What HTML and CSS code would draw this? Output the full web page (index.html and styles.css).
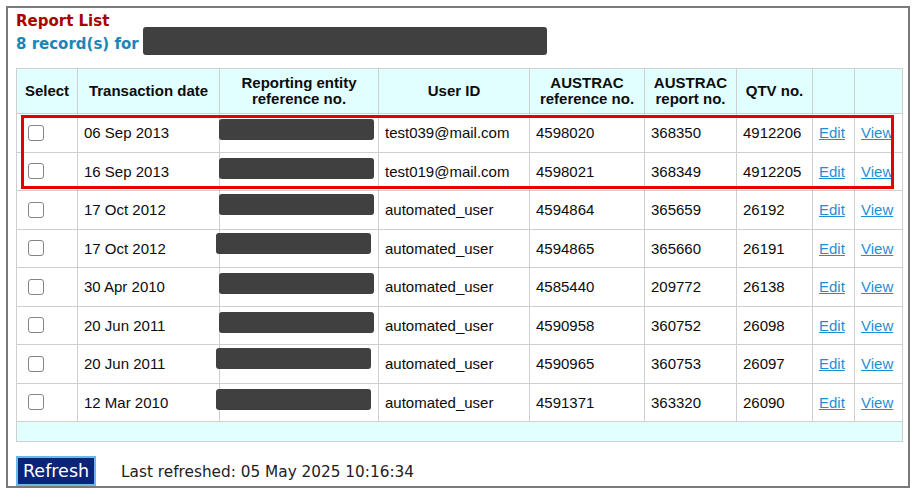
FILE: index.html
```html
<!DOCTYPE html>
<html lang="en">
<head>
  <meta charset="UTF-8">
  <title>Report List</title>
  <link rel="stylesheet" href="styles.css">
</head>
<body>
  <div class="frame">
    <h1 class="title">Report List</h1>
    <div class="records">
      <span class="records-text">8 record(s) for</span>
      <span class="redact redact-name"></span>
    </div>

    <div class="table-wrap">
      <table class="reports">
        <colgroup>
          <col class="c-select">
          <col class="c-date">
          <col class="c-ref">
          <col class="c-user">
          <col class="c-aref">
          <col class="c-arep">
          <col class="c-qtv">
          <col class="c-edit">
          <col class="c-view">
        </colgroup>
        <thead>
          <tr>
            <th>Select</th>
            <th>Transaction date</th>
            <th>Reporting entity<br>reference no.</th>
            <th>User ID</th>
            <th>AUSTRAC<br>reference no.</th>
            <th>AUSTRAC<br>report no.</th>
            <th>QTV no.</th>
            <th></th>
            <th></th>
          </tr>
        </thead>
        <tbody>
          <tr>
            <td class="sel"><span class="check"></span></td>
            <td>06 Sep 2013</td>
            <td class="ref"><span class="redact"></span></td>
            <td>test039@mail.com</td>
            <td>4598020</td>
            <td>368350</td>
            <td>4912206</td>
            <td><a href="#">Edit</a></td>
            <td><a href="#">View</a></td>
          </tr>
          <tr>
            <td class="sel"><span class="check"></span></td>
            <td>16 Sep 2013</td>
            <td class="ref"><span class="redact"></span></td>
            <td>test019@mail.com</td>
            <td>4598021</td>
            <td>368349</td>
            <td>4912205</td>
            <td><a href="#">Edit</a></td>
            <td><a href="#">View</a></td>
          </tr>
          <tr>
            <td class="sel"><span class="check"></span></td>
            <td>17 Oct 2012</td>
            <td class="ref"><span class="redact up"></span></td>
            <td>automated_user</td>
            <td>4594864</td>
            <td>365659</td>
            <td>26192</td>
            <td><a href="#">Edit</a></td>
            <td><a href="#">View</a></td>
          </tr>
          <tr>
            <td class="sel"><span class="check"></span></td>
            <td>17 Oct 2012</td>
            <td class="ref"><span class="redact up left"></span></td>
            <td>automated_user</td>
            <td>4594865</td>
            <td>365660</td>
            <td>26191</td>
            <td><a href="#">Edit</a></td>
            <td><a href="#">View</a></td>
          </tr>
          <tr>
            <td class="sel"><span class="check"></span></td>
            <td>30 Apr 2010</td>
            <td class="ref"><span class="redact"></span></td>
            <td>automated_user</td>
            <td>4585440</td>
            <td>209772</td>
            <td>26138</td>
            <td><a href="#">Edit</a></td>
            <td><a href="#">View</a></td>
          </tr>
          <tr>
            <td class="sel"><span class="check"></span></td>
            <td>20 Jun 2011</td>
            <td class="ref"><span class="redact"></span></td>
            <td>automated_user</td>
            <td>4590958</td>
            <td>360752</td>
            <td>26098</td>
            <td><a href="#">Edit</a></td>
            <td><a href="#">View</a></td>
          </tr>
          <tr>
            <td class="sel"><span class="check"></span></td>
            <td>20 Jun 2011</td>
            <td class="ref"><span class="redact up left"></span></td>
            <td>automated_user</td>
            <td>4590965</td>
            <td>360753</td>
            <td>26097</td>
            <td><a href="#">Edit</a></td>
            <td><a href="#">View</a></td>
          </tr>
          <tr>
            <td class="sel"><span class="check"></span></td>
            <td>12 Mar 2010</td>
            <td class="ref"><span class="redact left"></span></td>
            <td>automated_user</td>
            <td>4591371</td>
            <td>363320</td>
            <td>26090</td>
            <td><a href="#">Edit</a></td>
            <td><a href="#">View</a></td>
          </tr>
        </tbody>
        <tfoot>
          <tr><td colspan="9"></td></tr>
        </tfoot>
      </table>
      <div class="highlight"></div>
    </div>

    <div class="bottom">
      <button class="refresh" type="button">Refresh</button>
      <span class="last">Last refreshed: 05 May 2025 10:16:34</span>
    </div>
  </div>
</body>
</html>
```

FILE: styles.css
```css
body {
  margin: 0;
  background: #fff;
  font-family: "Liberation Sans", Arial, sans-serif;
  color: #111;
}

.frame {
  margin: 6px 0 0 6px;
  width: 892px;
  height: 478px;
  border: 2px solid #7a7a7a;
  padding: 0 0 0 8px;
}

.title {
  margin: 4px 0 0;
  font-family: "DejaVu Sans", Verdana, sans-serif;
  font-size: 15px;
  line-height: 18px;
  font-weight: bold;
  color: #aa0000;
}

.records {
  display: flex;
  align-items: center;
  height: 28px;
  margin-top: -3px;
}

.records-text {
  font-family: "DejaVu Sans", Verdana, sans-serif;
  font-size: 15px;
  font-weight: bold;
  color: #1b86b6;
  padding-top: 6px;
  margin-right: 4px;
}

.redact {
  display: block;
  background: #404040;
  border-radius: 3px;
}

.redact-name {
  width: 404px;
  height: 28px;
}

/* table */
.table-wrap {
  position: relative;
  margin-top: 13px;
  width: 886px;
}

.reports {
  width: 886px;
  table-layout: fixed;
  border-collapse: collapse;
  font-size: 15px;
  color: #0c0c0c;
  border: 1px solid #c8c8c8;
}

.c-select { width: 61px; }
.c-date { width: 142px; }
.c-ref { width: 159px; }
.c-user { width: 151px; }
.c-aref { width: 115px; }
.c-arep { width: 92px; }
.c-qtv { width: 76px; }
.c-edit { width: 42px; }
.c-view { width: 48px; }

.reports th,
.reports td {
  border: 1px solid #cfcfcf;
  padding: 0 6px;
  text-align: left;
  white-space: nowrap;
  overflow: hidden;
}

.reports thead tr {
  height: 45px;
  background: #e2ffff;
}

.reports th {
  text-align: center;
  font-weight: bold;
  line-height: 16px;
  padding: 0 2px;
}

.reports tbody tr {
  height: 38.5px;
}

.reports tfoot tr {
  height: 20px;
  background: #e2ffff;
}

.reports td.sel {
  padding-left: 11px;
}

.check {
  display: block;
  width: 14px;
  height: 14px;
  border: 1.5px solid #858585;
  border-radius: 3px;
  background: #fff;
}

.reports td.ref {
  padding: 0;
  overflow: visible;
}

.reports td.ref .redact {
  position: relative;
  z-index: 1;
  width: 155px;
  height: 21px;
  margin-left: -1px;
  transform: translateY(-3px);
}

.reports td.ref .redact.up {
  transform: translateY(-5px);
}

.reports td.ref .redact.left {
  margin-left: -4px;
}

.reports a {
  color: #1f8fd4;
  text-decoration: underline;
}

.highlight {
  position: absolute;
  left: 5px;
  top: 47px;
  width: 867px;
  height: 68px;
  border: 3px solid #e30000;
  z-index: 2;
}

/* footer */
.bottom {
  display: flex;
  align-items: center;
  margin-top: 14px;
}

.refresh {
  height: 30px;
  padding: 0 5px;
  background: #0b2378;
  border: 2px solid #6db6ea;
  color: #fff;
  font-family: "DejaVu Sans", Verdana, sans-serif;
  font-size: 17.5px;
  cursor: pointer;
}

.last {
  margin-left: 25px;
  font-family: "DejaVu Sans", Verdana, sans-serif;
  font-size: 15.3px;
  color: #222;
  padding-top: 2px;
}
```
